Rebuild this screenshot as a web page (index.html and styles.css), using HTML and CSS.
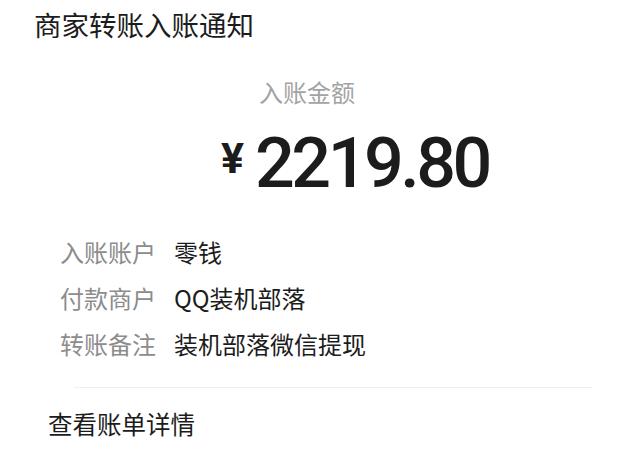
FILE: index.html
```html
<!DOCTYPE html>
<html lang="zh-CN">
<head>
<meta charset="utf-8">
<title>商家转账入账通知</title>
<link rel="stylesheet" href="styles.css">
</head>
<body>
<div class="card">
  <h1 class="title">商家转账入账通知</h1>
  <div class="amount-label">入账金额</div>
  <div class="amount"><span class="yen">¥</span><span class="num">2219.80</span></div>
  <div class="rows">
    <div class="row"><span class="k">入账账户</span><span class="v">零钱</span></div>
    <div class="row"><span class="k">付款商户</span><span class="v">QQ装机部落</span></div>
    <div class="row"><span class="k">转账备注</span><span class="v">装机部落微信提现</span></div>
  </div>
  <div class="divider"></div>
  <div class="detail">查看账单详情</div>
</div>
</body>
</html>
```
FILE: styles.css
```css
html, body {
  margin: 0;
  padding: 0;
  background: #ffffff;
}
.card {
  width: 631px;
  height: 455px;
  font-family: "Noto Sans CJK SC", "Noto Sans", sans-serif;
  color: #1c1c1c;
  display: flex;
  flex-direction: column;
  overflow: hidden;
}
.title {
  margin: 0;
  padding: 11px 0 0 34px;
  font-size: 27.5px;
  line-height: 27px;
  font-weight: 400;
}
.amount-label {
  margin-top: 42px;
  padding-left: 259px;
  font-size: 24px;
  line-height: 24px;
  color: #a3a3a3;
}
.amount {
  display: flex;
  align-items: center;
  padding-left: 221px;
  margin-top: 24px;
}
.yen {
  font-family: "Roboto", "Liberation Sans", sans-serif;
  font-size: 43px;
  line-height: 43px;
  font-weight: 700;
  margin-right: 11px;
  margin-bottom: 10px;
}
.num {
  font-family: "Roboto", "Liberation Sans", sans-serif;
  font-size: 70px;
  line-height: 70px;
  font-weight: 500;
  letter-spacing: -3.5px;
}
.rows {
  margin-top: 41px;
  padding-left: 60px;
  display: flex;
  flex-direction: column;
  gap: 21px;
}
.row {
  display: flex;
  gap: 18px;
  font-size: 24px;
  line-height: 25px;
}
.k {
  color: #8c8c8c;
}
.v {
  color: #1c1c1c;
}
.divider {
  margin: 31px 0 0 74px;
  width: 518px;
  height: 1px;
  background: #efefef;
}
.detail {
  margin-top: 24px;
  padding-left: 48px;
  font-size: 24.5px;
  line-height: 24px;
}
```
